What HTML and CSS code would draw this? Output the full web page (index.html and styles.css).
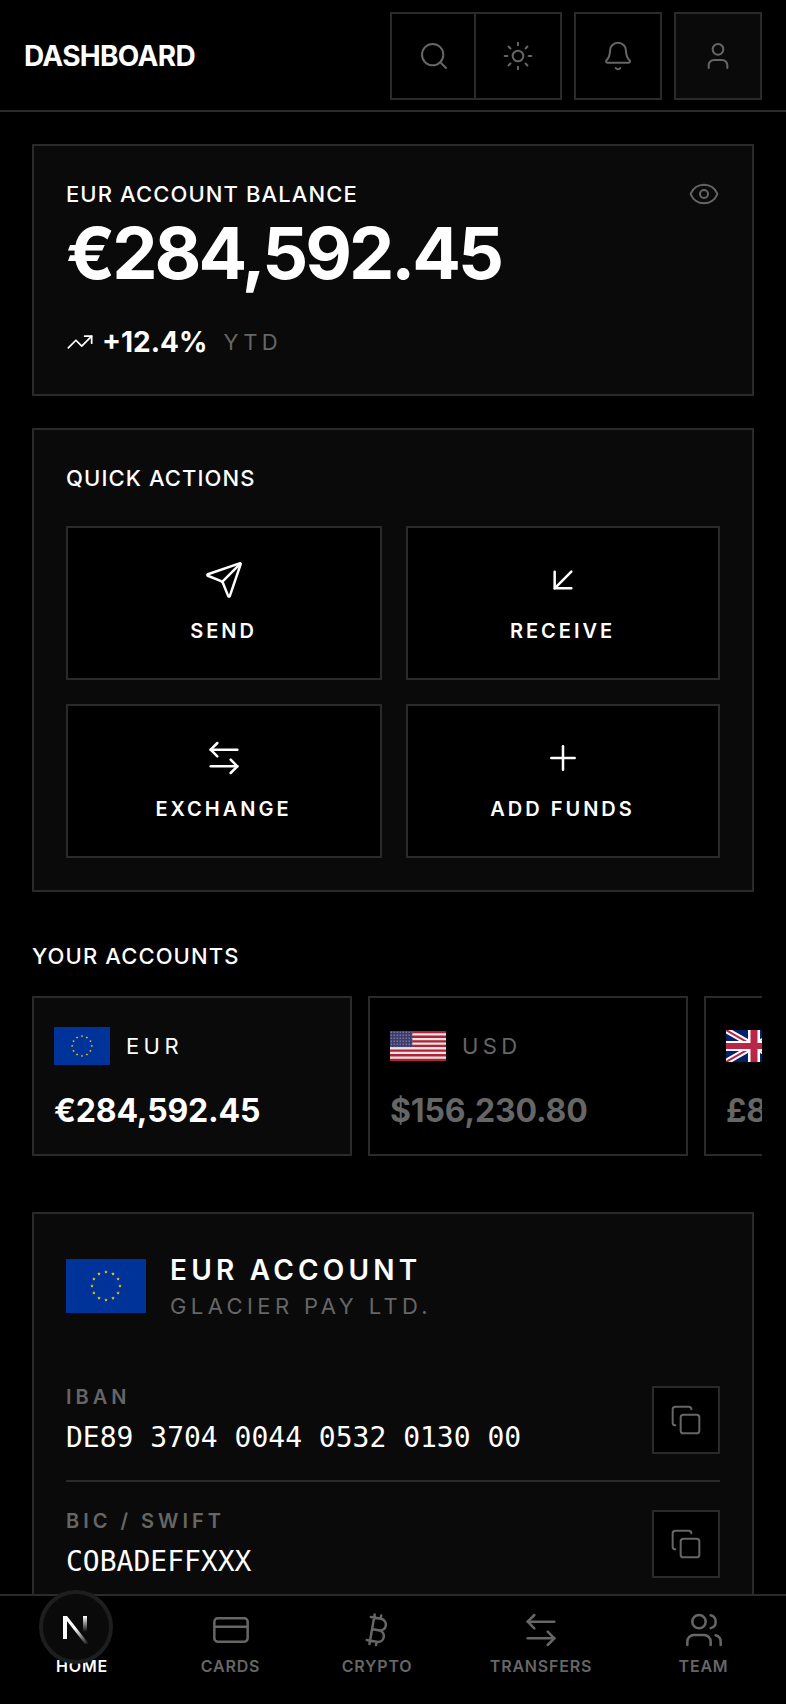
FILE: index.html
```html
<!DOCTYPE html>
<html lang="en">
<head>
    <meta charset="UTF-8">
    <meta name="viewport" content="width=device-width, initial-scale=1.0">
    <title>Dashboard</title>
    <link rel="stylesheet" href="styles.css">
</head>
<body>
    <svg class="defs" width="0" height="0" aria-hidden="true">
        <defs>
            <polygon id="star" points="0,-1.9 .5,-.6 1.8,-.6 .8,.3 1.1,1.5 0,.8 -1.1,1.5 -.8,.3 -1.8,-.6 -.5,-.6" fill="#fc0"/>
            <symbol id="flag-eu" viewBox="0 0 80 54" preserveAspectRatio="none">
                <rect width="80" height="54" fill="#039"/>
                <use href="#star" x="40" y="13"/>
                <use href="#star" x="47" y="14.9"/>
                <use href="#star" x="52.1" y="20"/>
                <use href="#star" x="54" y="27"/>
                <use href="#star" x="52.1" y="34"/>
                <use href="#star" x="47" y="39.1"/>
                <use href="#star" x="40" y="41"/>
                <use href="#star" x="33" y="39.1"/>
                <use href="#star" x="27.9" y="34"/>
                <use href="#star" x="26" y="27"/>
                <use href="#star" x="27.9" y="20"/>
                <use href="#star" x="33" y="14.9"/>
            </symbol>
            <pattern id="us-stars" width="3" height="3" patternUnits="userSpaceOnUse">
                <rect width="3" height="3" fill="#3c3b6e"/>
                <rect x=".6" y=".6" width="1.2" height="1.2" fill="#9a9ab0"/>
            </pattern>
            <symbol id="icon-arrows" viewBox="0 0 24 24">
                <path d="M8 3 4 7l4 4"/><path d="M4 7h16"/><path d="m16 21 4-4-4-4"/><path d="M20 17H4"/>
            </symbol>
            <symbol id="icon-copy" viewBox="0 0 24 24">
                <rect width="14" height="14" x="8" y="8" rx="2" ry="2"/>
                <path d="M4 16c-1.1 0-2-.9-2-2V4c0-1.1.9-2 2-2h10c1.1 0 2 .9 2 2"/>
            </symbol>
        </defs>
    </svg>

    <div class="app">
        <header class="topbar">
            <h1 class="page-title">DASHBOARD</h1>
            <div class="topbar-actions">
                <div class="icon-group">
                    <button class="icon-btn">
                        <svg class="icon icon-sm" viewBox="0 0 24 24"><path d="m21 21-4.3-4.3"/><circle cx="11" cy="11" r="8"/></svg>
                    </button>
                    <button class="icon-btn">
                        <svg class="icon icon-sm" viewBox="0 0 24 24"><circle cx="12" cy="12" r="4"/><path d="M12 2v2"/><path d="M12 20v2"/><path d="m4.93 4.93 1.41 1.41"/><path d="m17.66 17.66 1.41 1.41"/><path d="M2 12h2"/><path d="M20 12h2"/><path d="m6.34 17.66-1.41 1.41"/><path d="m19.07 4.93-1.41 1.41"/></svg>
                    </button>
                </div>
                <button class="icon-btn">
                    <svg class="icon icon-sm" viewBox="0 0 24 24"><path d="M10.268 21a2 2 0 0 0 3.464 0"/><path d="M3.262 15.326A1 1 0 0 0 4 17h16a1 1 0 0 0 .74-1.673C19.41 13.956 18 12.499 18 8A6 6 0 0 0 6 8c0 4.499-1.411 5.956-2.738 7.326"/></svg>
                </button>
                <button class="icon-btn icon-btn-raised">
                    <svg class="icon icon-sm" viewBox="0 0 24 24"><path d="M19 21v-2a4 4 0 0 0-4-4H9a4 4 0 0 0-4 4v2"/><circle cx="12" cy="7" r="4"/></svg>
                </button>
            </div>
        </header>

        <main class="content">
            <section class="card balance-card">
                <div class="balance-top">
                    <span class="section-label">EUR ACCOUNT BALANCE</span>
                    <svg class="icon icon-sm" viewBox="0 0 24 24"><path d="M2.062 12.348a1 1 0 0 1 0-.696 10.75 10.75 0 0 1 19.876 0 1 1 0 0 1 0 .696 10.75 10.75 0 0 1-19.876 0"/><circle cx="12" cy="12" r="3"/></svg>
                </div>
                <div class="balance-amount">€284,592.45</div>
                <div class="balance-trend">
                    <svg class="icon icon-trend" viewBox="0 0 24 24"><path d="M16 7h6v6"/><path d="m22 7-8.5 8.5-5-5L2 17"/></svg>
                    <span class="trend-value">+12.4%</span>
                    <span class="trend-period">YTD</span>
                </div>
            </section>

            <section class="card actions-card">
                <h2 class="section-label">QUICK ACTIONS</h2>
                <div class="actions-grid">
                    <button class="action">
                        <svg class="icon icon-lg" viewBox="0 0 24 24"><path d="M14.536 21.686a.5.5 0 0 0 .937-.024l6.5-19a.496.496 0 0 0-.635-.635l-19 6.5a.5.5 0 0 0-.024.937l7.93 3.18a2 2 0 0 1 1.112 1.11z"/><path d="m21.854 2.147-10.94 10.939"/></svg>
                        <span>SEND</span>
                    </button>
                    <button class="action">
                        <svg class="icon icon-lg" viewBox="0 0 24 24"><path d="M17 7 7 17"/><path d="M17 17H7V7"/></svg>
                        <span>RECEIVE</span>
                    </button>
                    <button class="action">
                        <svg class="icon icon-lg"><use href="#icon-arrows"/></svg>
                        <span>EXCHANGE</span>
                    </button>
                    <button class="action">
                        <svg class="icon icon-lg" viewBox="0 0 24 24"><path d="M5 12h14"/><path d="M12 5v14"/></svg>
                        <span>ADD FUNDS</span>
                    </button>
                </div>
            </section>

            <h2 class="section-label accounts-title">YOUR ACCOUNTS</h2>
            <div class="accounts">
                <div class="account account-active">
                    <div class="account-head">
                        <svg class="flag flag-eu"><use href="#flag-eu"/></svg>
                        <span class="account-code">EUR</span>
                    </div>
                    <div class="account-balance">€284,592.45</div>
                </div>
                <div class="account">
                    <div class="account-head">
                        <svg class="flag" viewBox="0 0 56 30" preserveAspectRatio="none">
                            <rect width="56" height="30" fill="#e6e6e6"/>
                            <path fill="#b22234" d="M0 0h56v2.3H0zM0 4.6h56v2.3H0zM0 9.2h56v2.3H0zM0 13.8h56v2.3H0zM0 18.5h56v2.3H0zM0 23.1h56v2.3H0zM0 27.7h56V30H0z"/>
                            <rect width="22.4" height="16.1" fill="url(#us-stars)"/>
                        </svg>
                        <span class="account-code">USD</span>
                    </div>
                    <div class="account-balance">$156,230.80</div>
                </div>
                <div class="account">
                    <div class="account-head">
                        <svg class="flag flag-uk" viewBox="0 0 56 32" preserveAspectRatio="none">
                            <rect width="56" height="32" fill="#012169"/>
                            <path d="M0 0 56 32M56 0 0 32" stroke="#fff" stroke-width="6"/>
                            <path d="M0 0 56 32M56 0 0 32" stroke="#b8264a" stroke-width="2"/>
                            <path d="M28 0v32" stroke="#fff" stroke-width="12"/>
                            <path d="M0 16h56" stroke="#fff" stroke-width="10"/>
                            <path d="M28 0v32" stroke="#b8264a" stroke-width="7"/>
                            <path d="M0 16h56" stroke="#b8264a" stroke-width="6"/>
                        </svg>
                        <span class="account-code">GBP</span>
                    </div>
                    <div class="account-balance">£89,420.15</div>
                </div>
            </div>

            <section class="card details-card">
                <div class="details-head">
                    <svg class="flag-large"><use href="#flag-eu"/></svg>
                    <div>
                        <div class="details-title">EUR ACCOUNT</div>
                        <div class="details-sub">GLACIER PAY LTD.</div>
                    </div>
                </div>
                <div class="detail-row">
                    <div>
                        <div class="detail-label">IBAN</div>
                        <div class="detail-value">DE89 3704 0044 0532 0130 00</div>
                    </div>
                    <button class="copy-btn"><svg class="icon icon-sm"><use href="#icon-copy"/></svg></button>
                </div>
                <div class="detail-row">
                    <div>
                        <div class="detail-label">BIC / SWIFT</div>
                        <div class="detail-value">COBADEFFXXX</div>
                    </div>
                    <button class="copy-btn"><svg class="icon icon-sm"><use href="#icon-copy"/></svg></button>
                </div>
            </section>
        </main>

        <nav class="bottom-nav">
            <a class="nav-item nav-item-active">
                <svg class="icon icon-lg" viewBox="0 0 24 24"><path d="M15 21v-8a1 1 0 0 0-1-1h-4a1 1 0 0 0-1 1v8"/><path d="M3 10a2 2 0 0 1 .709-1.528l7-5.999a2 2 0 0 1 2.582 0l7 5.999A2 2 0 0 1 21 10v9a2 2 0 0 1-2 2H5a2 2 0 0 1-2-2z"/></svg>
                <span>HOME</span>
            </a>
            <a class="nav-item">
                <svg class="icon icon-lg" viewBox="0 0 24 24"><rect width="20" height="14" x="2" y="5" rx="2"/><line x1="2" x2="22" y1="10" y2="10"/></svg>
                <span>CARDS</span>
            </a>
            <a class="nav-item">
                <svg class="icon icon-lg" viewBox="0 0 24 24"><path d="M11.767 19.089c4.924.868 6.14-6.025 1.216-6.894m-1.216 6.894L5.86 18.047m5.908 1.042-.347 1.97m1.563-8.864c4.924.869 6.14-6.025 1.215-6.893m-1.215 6.893-3.94-.694m5.155-6.2L8.29 4.26m5.908 1.042.348-1.97M7.48 20.364l3.126-17.727"/></svg>
                <span>CRYPTO</span>
            </a>
            <a class="nav-item">
                <svg class="icon icon-lg"><use href="#icon-arrows"/></svg>
                <span>TRANSFERS</span>
            </a>
            <a class="nav-item">
                <svg class="icon icon-lg" viewBox="0 0 24 24"><path d="M16 21v-2a4 4 0 0 0-4-4H6a4 4 0 0 0-4 4v2"/><path d="M16 3.128a4 4 0 0 1 0 7.744"/><path d="M22 21v-2a4 4 0 0 0-3-3.87"/><circle cx="9" cy="7" r="4"/></svg>
                <span>TEAM</span>
            </a>
        </nav>

        <div class="dev-badge">
            <svg class="dev-logo" viewBox="0 0 26 28">
                <defs>
                    <linearGradient id="n-diag" x1="0" y1="0" x2="1" y2="1">
                        <stop offset=".45" stop-color="#fff"/>
                        <stop offset="1" stop-color="#fff" stop-opacity="0"/>
                    </linearGradient>
                    <linearGradient id="n-bar" x1="0" y1="0" x2="0" y2="1">
                        <stop offset="0" stop-color="#fff"/>
                        <stop offset="1" stop-color="#fff" stop-opacity="0"/>
                    </linearGradient>
                </defs>
                <rect x="0" y="0" width="4" height="23" fill="#fff"/>
                <polygon points="0,0 4,0 26,28 22,28" fill="url(#n-diag)"/>
                <rect x="20" y="0" width="4" height="16" fill="url(#n-bar)"/>
            </svg>
        </div>
    </div>
</body>
</html>
```

FILE: styles.css
```css
* {
    box-sizing: border-box;
}

body {
    margin: 0;
    background-color: #000;
    color: #fff;
    font-family: Inter, "Liberation Sans", sans-serif;
}

h1,
h2 {
    margin: 0;
}

button {
    padding: 0;
    font-family: inherit;
    color: inherit;
}

.defs {
    position: absolute;
}

.app {
    position: relative;
    display: flex;
    flex-direction: column;
    height: 100vh;
    overflow: hidden;
}

.icon {
    display: block;
    fill: none;
    stroke: currentColor;
    stroke-width: 1.5;
    stroke-linecap: round;
    stroke-linejoin: round;
}

.icon-sm {
    width: 32px;
    height: 32px;
    color: #666;
}

.icon-lg {
    width: 40px;
    height: 40px;
}

.icon-trend {
    width: 28px;
    height: 28px;
}

/* top bar */
.topbar {
    flex: none;
    display: flex;
    justify-content: space-between;
    align-items: flex-start;
    height: 112px;
    padding: 12px 24px 0;
    border-bottom: 2px solid #2a2a2a;
}

.page-title {
    margin-top: 22px;
    font-size: 28px;
    line-height: 44px;
    font-weight: 700;
    letter-spacing: -0.025em;
}

.topbar-actions {
    display: flex;
    gap: 12px;
}

.icon-group {
    display: flex;
}

.icon-btn {
    display: flex;
    justify-content: center;
    align-items: center;
    width: 88px;
    height: 88px;
    background-color: #000;
    border: 2px solid #2a2a2a;
}

.icon-group .icon-btn {
    width: 86px;
}

.icon-group .icon-btn:first-child {
    padding-left: 2px;
}

.icon-group .icon-btn + .icon-btn {
    border-left: none;
}

.icon-btn-raised {
    background-color: #0a0a0a;
}

/* main column */
.content {
    flex: 1;
    min-height: 0;
    padding: 32px 32px 0;
    overflow: hidden;
}

.card {
    background-color: #0a0a0a;
    border: 2px solid #2a2a2a;
}

.section-label {
    font-size: 22px;
    line-height: 32px;
    font-weight: 500;
    letter-spacing: 0.05em;
}

.balance-card {
    height: 252px;
    padding: 32px 32px 0;
}

.balance-top {
    display: flex;
    justify-content: space-between;
    align-items: center;
}

.balance-amount {
    margin-top: 3px;
    font-size: 72px;
    line-height: 80px;
    font-weight: 700;
    letter-spacing: -0.042em;
}

.balance-trend {
    display: flex;
    align-items: center;
    gap: 8px;
    margin-top: 31px;
}

.trend-value {
    font-size: 28px;
    line-height: 36px;
    font-weight: 700;
}

.trend-period {
    margin-left: 8px;
    font-size: 22px;
    letter-spacing: 0.2em;
    color: #666;
}

.actions-card {
    margin-top: 32px;
    padding: 32px;
}

.actions-grid {
    display: grid;
    grid-template-columns: 316px 314px;
    gap: 24px;
    margin-top: 32px;
}

.action {
    display: flex;
    flex-direction: column;
    align-items: center;
    gap: 16px;
    height: 154px;
    padding: 32px 1px 0 0;
    background-color: #000;
    border: 2px solid #2a2a2a;
    font-size: 20px;
    line-height: 30px;
    font-weight: 600;
    letter-spacing: 0.15em;
}

.accounts-title {
    margin-top: 48px;
}

.accounts {
    display: flex;
    gap: 16px;
    width: 730px;
    margin-top: 24px;
    overflow: hidden;
}

.account {
    flex: none;
    width: 320px;
    height: 160px;
    padding: 28px 20px 24px;
    border: 2px solid #2a2a2a;
    color: #666;
}

.account-active {
    background-color: #0a0a0a;
    color: #fff;
}

.account-head {
    display: flex;
    align-items: center;
    gap: 16px;
    height: 40px;
}

.flag {
    display: block;
    flex: none;
    width: 56px;
    height: 30px;
}

.flag-eu {
    height: 38px;
}

.flag-uk {
    height: 32px;
}

.account-code {
    font-size: 22px;
    letter-spacing: 0.2em;
}

.account-balance {
    margin-top: 25px;
    font-size: 32px;
    line-height: 40px;
    font-weight: 700;
    letter-spacing: -0.005em;
}

/* account details */
.details-card {
    margin-top: 56px;
    padding: 36px 32px 0;
}

.details-head {
    display: flex;
    align-items: center;
    gap: 24px;
    margin-bottom: 64px;
}

.flag-large {
    display: block;
    width: 80px;
    height: 54px;
}

.details-title {
    font-size: 28px;
    line-height: 40px;
    font-weight: 600;
    letter-spacing: 0.15em;
}

.details-sub {
    font-size: 22px;
    line-height: 32px;
    letter-spacing: 0.2em;
    color: #666;
}

.detail-row {
    display: flex;
    justify-content: space-between;
    padding-bottom: 26px;
    margin-bottom: 28px;
    border-bottom: 2px solid #2a2a2a;
}

.detail-label {
    font-size: 20px;
    line-height: 22px;
    font-weight: 600;
    letter-spacing: 0.2em;
    color: #666;
}

.detail-value {
    margin-top: 14px;
    font-family: "DejaVu Sans Mono", monospace;
    font-size: 28px;
    line-height: 32px;
}

.copy-btn {
    display: flex;
    justify-content: center;
    align-items: center;
    width: 68px;
    height: 68px;
    background-color: #000;
    border: 2px solid #2a2a2a;
}

/* bottom nav */
.bottom-nav {
    flex: none;
    display: grid;
    grid-template-columns: 142px 155px 138px 190px 135px;
    height: 110px;
    padding: 14px 0 0 11px;
    background-color: #000;
    border-top: 2px solid #2a2a2a;
}

.nav-item {
    display: flex;
    flex-direction: column;
    align-items: center;
    gap: 4px;
    color: #666;
    font-size: 16px;
    line-height: 24px;
    font-weight: 600;
    letter-spacing: 0.05em;
}

.nav-item-active {
    color: #fff;
}

.dev-badge {
    position: absolute;
    left: 39px;
    bottom: 40px;
    display: flex;
    justify-content: center;
    align-items: center;
    width: 74px;
    height: 74px;
    padding-top: 5px;
    background-color: #0a0a0a;
    border: 4px solid #1e1e1e;
    border-radius: 50%;
}

.dev-logo {
    width: 26px;
    height: 28px;
}
```
